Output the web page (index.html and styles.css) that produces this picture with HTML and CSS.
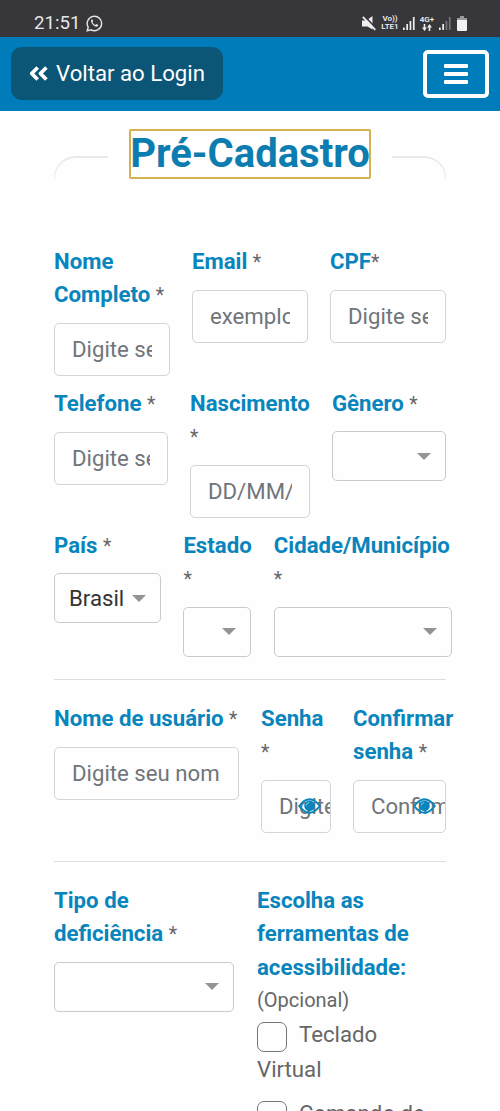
FILE: index.html
```html
<!DOCTYPE html>
<html lang="pt-BR">
<head>
<meta charset="utf-8">
<title>Pré-Cadastro</title>
<link rel="stylesheet" href="styles.css">
</head>
<body>
<div class="status">
  <span class="clock">21:51</span>
  <svg class="whats" width="17" height="17" viewBox="0 0 17 17" fill="none" stroke="#e6e6e8" stroke-width="1.4"><path d="M1.2 15.8l1-3.7A7.2 7.2 0 1 1 5 14.8z"/><path d="M5.3 4.7c.5-.6 1-.5 1.3.1l.6 1.4-.7 1c.6 1.3 1.5 2.1 2.8 2.7l1-.9 1.6.8c.5.3.4 1-.1 1.5C9.500 13.200 4 8 5.300 4.700z" fill="#e6e6e8" stroke="none"/></svg>
  <div class="tray">
    <svg width="14" height="15" viewBox="0 0 14 15"><path d="M0 4.500h4.500L10.500 0v13.500L5.500 10.500H0z" fill="#eee"/><path d="M2.200 0l12 12.500" stroke="#36363b" stroke-width="1.800"/><path d="M.800 .800l12.500 13" stroke="#eee" stroke-width="1.800"/></svg>
    <span class="net lte"><b>Vo))</b><b>LTE1</b></span>
    <svg class="bars" width="12" height="13" viewBox="0 0 12 13" fill="#eee"><path d="M0 10.500h1.700V13H0zM3.300 7H5v6H3.300zM6.600 4h1.700v9H6.600zM9.900 0h1.700v13H9.900z"/></svg>
    <span class="net four"><b>4G+</b><svg width="10" height="7" viewBox="0 0 10 7" fill="#eee"><path d="M1.700 0h1.600v3.500H5L2.500 7 0 3.500h1.700zM6.700 7h1.600V3.500H10L7.500 0 5 3.500h1.700z"/></svg></span>
    <svg class="bars second" width="12" height="13" viewBox="0 0 12 13" fill="#eee"><path d="M0 10.500h1.700V13H0zM3.300 7H5v6H3.300z"/><path d="M6.600 4h1.700v9H6.600zM9.900 0h1.700v13H9.900z" fill="#77777b"/></svg>
    <svg class="battery" width="10" height="15" viewBox="0 0 10 15"><path d="M3 0h4v2h3v3H0V2h3z" fill="#99999c"/><path d="M0 4h10v10a1 1 0 0 1-1 1H1a1 1 0 0 1-1-1z" fill="#f2f2f2"/></svg>
  </div>
</div>
<header class="navbar">
  <a class="back"><svg width="19" height="15" viewBox="0 0 19 15" fill="none" stroke="#fff" stroke-width="3.700" stroke-linejoin="round"><path d="M8.700 1.500L2.700 7.500l6 6M17.400 1.500l-6 6 6 6"/></svg><span>Voltar ao Login</span></a>
  <button class="toggler" aria-label="Menu"><i></i><i></i><i></i></button>
</header>
<main class="page">
  <div class="title"><span class="edge left"></span><h1>Pré-Cadastro</h1><span class="edge right"></span></div>
  <form>
    <div class="row r1">
      <div class="field"><label>Nome Completo <small>*</small></label><div class="input"><span>Digite seu nome</span></div></div>
      <div class="field"><label>Email <small>*</small></label><div class="input"><span>exemplo@email.com</span></div></div>
      <div class="field"><label>CPF<small>*</small></label><div class="input"><span>Digite seu CPF</span></div></div>
    </div>
    <div class="row r2">
      <div class="field"><label>Telefone <small>*</small></label><div class="input"><span>Digite seu telefone</span></div></div>
      <div class="field"><label>Nascimento <small>*</small></label><div class="input"><span>DD/MM/AAAA</span></div></div>
      <div class="field"><label>Gênero <small>*</small></label><div class="select"></div></div>
    </div>
    <div class="row r3">
      <div class="field"><label>País <small>*</small></label><div class="select">Brasil</div></div>
      <div class="field"><label>Estado <small>*</small></label><div class="select"></div></div>
      <div class="field"><label>Cidade/Município <small>*</small></label><div class="select"></div></div>
    </div>
    <hr>
    <div class="row r4">
      <div class="field"><label>Nome de usuário <small>*</small></label><div class="input user"><span>Digite seu nome</span></div></div>
      <div class="field"><label>Senha <small>*</small></label><div class="input password"><span>Digite sua senha</span><svg class="eye" width="23" height="16" viewBox="0 0 23 16"><path d="M1.200 8Q11.500-5.500 21.800 8 11.500 21.500 1.200 8z" fill="none" stroke="#0885bc" stroke-width="2"/><circle cx="11.500" cy="7.800" r="5.300" fill="#0885bc"/><path d="M8.200 7.500q.2-2.700 3-3" fill="none" stroke="#8fcbe5" stroke-width="1"/></svg></div></div>
      <div class="field"><label>Confirmar senha <small>*</small></label><div class="input password"><span>Confirme a senha</span><svg class="eye" width="23" height="16" viewBox="0 0 23 16"><path d="M1.200 8Q11.500-5.500 21.800 8 11.500 21.500 1.200 8z" fill="none" stroke="#0885bc" stroke-width="2"/><circle cx="11.500" cy="7.800" r="5.300" fill="#0885bc"/><path d="M8.200 7.500q.2-2.700 3-3" fill="none" stroke="#8fcbe5" stroke-width="1"/></svg></div></div>
    </div>
    <hr>
    <div class="row r5">
      <div class="field"><label>Tipo de deficiência <small>*</small></label><div class="select"></div></div>
      <div class="field"><label>Escolha as ferramentas de acessibilidade:</label><div class="optional">(Opcional)</div>
        <div class="check"><span class="box"></span>Teclado Virtual</div>
        <div class="check"><span class="box"></span>Comando de Voz</div>
      </div>
    </div>
  </form>
</main>
</body>
</html>
```

FILE: styles.css
```css
* { box-sizing: border-box; }
html, body { height: 1111px; overflow: hidden; }
body { margin: 0; background: #fefefe; font-family: Roboto, sans-serif; font-size: 22.2px; line-height: 33.3px; color: #666; display: flex; flex-direction: column; }
.status { height: 37px; flex: none; background: #36363b; color: #e6e6e8; display: flex; align-items: center; padding: 9px 33px 0 34px; }
.clock { font-size: 18.7px; line-height: 24px; width: 44px; white-space: nowrap; }
.whats { margin-left: 8px; }
.tray { margin-left: auto; display: flex; align-items: center; }
.net { display: flex; flex-direction: column; align-items: center; font-size: 8px; line-height: 8px; color: #eee; }
.net b { font-weight: 600; }
.lte { width: 18px; margin-left: 5px; }
.four { width: 14px; margin-left: 5px; }
.bars { margin-left: 4px; }
.second { margin-left: 5px; }
.battery { margin-left: 6px; }
.navbar { height: 74px; flex: none; background: #007cba; display: flex; justify-content: space-between; padding: 10px 11px 0; }
.back { width: 212px; height: 53px; border-radius: 11px; background: #0b5577; color: #fff; display: flex; align-items: center; gap: 8px; padding-left: 18px; white-space: nowrap; }
.toggler { width: 66px; height: 48px; margin-top: 3px; border: 4px solid #fff; border-radius: 5px; background: none; padding: 0; display: flex; flex-direction: column; align-items: center; justify-content: center; gap: 4px; }
.toggler i { width: 24px; height: 4px; border-radius: 1px; background: #fff; }
.page { flex: none; padding: 18px 48px 0 54px; }
.title { display: flex; justify-content: space-between; width: 392px; height: 50px; }
.title h1 { width: 242px; height: 50px; margin: 0; border: 2px solid #d6b14f; border-radius: 2px; font-size: 40px; line-height: 45px; font-weight: 700; color: #0b7db0; display: flex; justify-content: center; white-space: nowrap; }
.edge { width: 54px; height: 23px; margin-top: 27px; border-top: 2px solid #e9e9e9; }
.left { border-left: 1px solid #e9e9e9; border-top-left-radius: 22px; }
.right { border-right: 1px solid #e9e9e9; border-top-right-radius: 22px; }
form { padding-top: 66px; }
.row { display: grid; column-gap: 22px; align-items: start; }
.r1 { grid-template-columns: 116px 116px 116px; height: 142px; }
.r2 { grid-template-columns: 114px 120px 114px; height: 142px; }
.r3 { grid-template-columns: 107px 68px 178px; column-gap: 22.4px; height: 150px; }
.r4 { grid-template-columns: 185px 70px 93px; height: 159px; }
.r5 { grid-template-columns: 180px 189px; column-gap: 23px; }
.field { min-width: 0; }
label { display: block; font-weight: 700; color: #0885bc; }
small { font-weight: 400; font-size: 19.5px; color: #666; line-height: 20px; }
.input { height: 53px; margin-top: 11.5px; border: 1.5px solid #cfd5d9; border-radius: 5px; padding: 0 17px; display: flex; align-items: center; position: relative; color: #70757a; }
.input span { overflow: hidden; white-space: nowrap; flex: 1; min-width: 0; }
.user { padding-right: 19px; }
.password { padding-right: 0; }
.eye { position: absolute; right: 9px; top: 17px; }
.select { height: 50px; margin-top: 11px; border: 1.5px solid #c8cacc; border-radius: 5px; padding: 0 14px; display: flex; align-items: center; justify-content: space-between; color: #333; }
.select::after { content: ""; margin-left: auto; border: 7px solid transparent; border-top-color: #949494; border-bottom: 0; }
hr { height: 1px; margin: 0 0 22px; border: 0; width: 392px; background: #dcddde; }
.optional { font-size: 20px; }
.check { line-height: 34.5px; margin-bottom: 9px; }
.box { display: inline-block; width: 30px; height: 30px; border: 1.5px solid #747474; border-radius: 7px; margin-right: 12px; vertical-align: -10px; }
```
